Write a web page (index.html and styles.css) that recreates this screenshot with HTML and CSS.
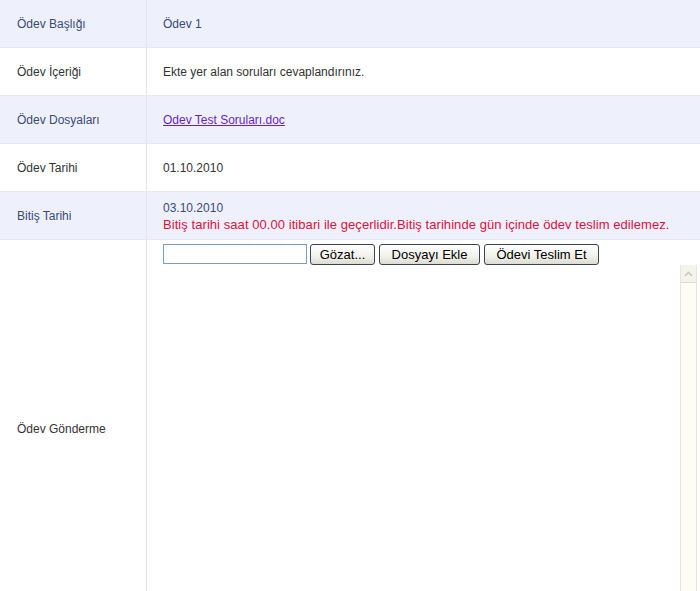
FILE: index.html
```html
<!DOCTYPE html>
<html lang="tr">
<head>
<meta charset="utf-8">
<link rel="stylesheet" href="styles.css">
</head>
<body>
<div class="form">
  <div class="row alt">
    <div class="label">Ödev Başlığı</div>
    <div class="value">Ödev 1</div>
  </div>
  <div class="row">
    <div class="label">Ödev İçeriği</div>
    <div class="value">Ekte yer alan soruları cevaplandırınız.</div>
  </div>
  <div class="row alt">
    <div class="label">Ödev Dosyaları</div>
    <div class="value"><a class="file-link" href="#">Odev Test Soruları.doc</a></div>
  </div>
  <div class="row">
    <div class="label">Ödev Tarihi</div>
    <div class="value">01.10.2010</div>
  </div>
  <div class="row alt">
    <div class="label">Bitiş Tarihi</div>
    <div class="value stacked">
      <div class="date">03.10.2010</div>
      <div class="warn">Bitiş tarihi saat 00.00 itibari ile geçerlidir.Bitiş tarihinde gün içinde ödev teslim edilemez.</div>
    </div>
  </div>
  <div class="row tall">
    <div class="label">Ödev Gönderme</div>
    <div class="value upload">
      <div class="controls">
        <span class="file-box"></span>
        <button class="btn btn-browse">Gözat...</button>
        <button class="btn btn-add">Dosyayı Ekle</button>
        <button class="btn btn-send">Ödevi Teslim Et</button>
      </div>
      <div class="editor">
        <div class="editor-body"></div>
        <div class="scrollbar">
          <div class="scroll-up">
            <svg width="9" height="6" viewBox="0 0 9 6"><path d="M1 5 L4.5 1.5 L8 5" fill="none" stroke="#c9c9bd" stroke-width="1.6"/></svg>
          </div>
          <div class="scroll-track"></div>
        </div>
      </div>
    </div>
  </div>
</div>
</body>
</html>
```

FILE: styles.css
```css
html, body {
  margin: 0;
  padding: 0;
  overflow: hidden;
  background: #ffffff;
}
body {
  font-family: "Liberation Sans", Arial, sans-serif;
  font-size: 12px;
  color: #333333;
}
.form {
  width: 700px;
  display: flex;
  flex-direction: column;
}
.row {
  display: grid;
  grid-template-columns: 147px 1fr;
  height: 47px;
  border-bottom: 1px solid #e6e9f2;
  background: #ffffff;
}
.row.alt {
  background: #eef1fc;
}
.row.alt .label,
.row.alt .value {
  color: #3b4a78;
}
.label {
  display: flex;
  align-items: center;
  padding-left: 17px;
  padding-top: 1px;
  border-right: 1px solid #e2e5ee;
  color: #333333;
}
.value {
  display: flex;
  align-items: center;
  padding-left: 16px;
  padding-top: 1px;
  color: #333333;
}
.file-link {
  color: #6a1fc4;
  text-decoration: underline;
}
.value.stacked {
  flex-direction: column;
  align-items: flex-start;
  justify-content: flex-start;
  padding-top: 9px;
}
.date {
  line-height: 15px;
}
.row.alt .warn {
  color: #e0103c;
  font-size: 13px;
  line-height: 17px;
  letter-spacing: 0.06px;
}
.row.tall {
  height: 376px;
  border-bottom: none;
}
.value.upload {
  flex-direction: column;
  align-items: stretch;
  justify-content: flex-start;
  padding-top: 3px;
  padding-right: 3px;
}
.controls {
  display: flex;
  align-items: center;
  gap: 4px;
  height: 22px;
}
.file-box {
  width: 142px;
  height: 18px;
  border: 1px solid #7f9db9;
  background: #ffffff;
  margin-right: -1px;
}
.btn {
  height: 21px;
  padding: 0;
  font-family: "Liberation Sans", Arial, sans-serif;
  font-size: 13px;
  color: #000000;
  border: 1px solid #3c4450;
  border-radius: 3px;
  background: linear-gradient(#ffffff, #f1f1ea 60%, #dcdcd2);
  line-height: 19px;
}
.btn-browse { width: 65px; }
.btn-add { width: 101px; }
.btn-send { width: 115px; }
.editor {
  display: flex;
  height: 330px;
  border-bottom: 1px solid #ecece0;
}
.editor-body {
  flex: 1;
  background: #ffffff;
}
.scrollbar {
  width: 15px;
  border-left: 1px solid #e6e6da;
  border-right: 1px solid #e6e6da;
  background: #fdfdf6;
  display: flex;
  flex-direction: column;
}
.scroll-up {
  height: 17px;
  display: flex;
  align-items: center;
  justify-content: center;
  background: #f4f4ec;
  border-bottom: 1px solid #dcdcd0;
}
.scroll-track {
  flex: 1;
}
```
